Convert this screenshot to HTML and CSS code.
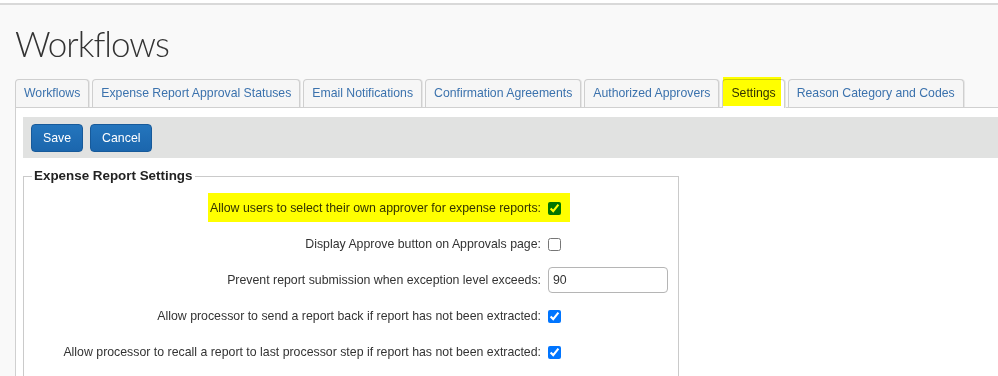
FILE: index.html
```html
<!DOCTYPE html>
<html lang="en">
<head>
  <meta charset="UTF-8">
  <title>Workflows - Settings</title>
  <link rel="stylesheet" href="styles.css">
</head>
<body>
<div class="topbar"></div>
<div class="page">
  <h1>Workflows</h1>

  <ul class="tabs">
    <li class="tab">Workflows</li>
    <li class="tab">Expense Report Approval Statuses</li>
    <li class="tab">Email Notifications</li>
    <li class="tab">Confirmation Agreements</li>
    <li class="tab">Authorized Approvers</li>
    <li class="tab active"><span class="hl hl-tab">Settings</span></li>
    <li class="tab">Reason Category and Codes</li>
  </ul>

  <div class="panel">
    <div class="toolbar">
      <button class="btn">Save</button>
      <button class="btn">Cancel</button>
    </div>

    <fieldset class="group">
      <legend>Expense Report Settings</legend>

      <div class="row">
        <label class="label"><span class="hl hl-row">Allow users to select their own approver for expense reports:</span></label>
        <input type="checkbox" checked>
      </div>
      <div class="row">
        <label class="label">Display Approve button on Approvals page:</label>
        <input type="checkbox">
      </div>
      <div class="row">
        <label class="label">Prevent report submission when exception level exceeds:</label>
        <input type="text" class="field" value="90">
      </div>
      <div class="row">
        <label class="label">Allow processor to send a report back if report has not been extracted:</label>
        <input type="checkbox" checked>
      </div>
      <div class="row">
        <label class="label">Allow processor to recall a report to last processor step if report has not been extracted:</label>
        <input type="checkbox" checked>
      </div>
    </fieldset>
  </div>
</div>
</body>
</html>
```

FILE: styles.css
```css
body {
  margin: 0;
  font-family: "Liberation Sans", Arial, sans-serif;
  font-size: 12.33px;
  color: #333;
  background: #f9f9f9;
}
.topbar {
  height: 3px;
  background: #fff;
  border-bottom: 2px solid #d9d9d9;
}
.page {
  padding: 0 0 0 15px;
}
h1 {
  margin: 0;
  padding: 16px 0 0;
  height: 60px;
  box-sizing: border-box;
  font-family: Lato, "Open Sans", sans-serif;
  font-weight: 300;
  font-size: 35px;
  letter-spacing: -1px;
  line-height: 44px;
  color: #333;
}

/* tabs */
.tabs {
  display: flex;
  gap: 3px;
  margin: 14px 0 0;
  padding: 0;
  list-style: none;
  position: relative;
  z-index: 1;
}
.tab {
  height: 28px;
  box-sizing: border-box;
  padding: 0 8px;
  font-size: 12.25px;
  line-height: 27px;
  color: #3b72ad;
  background: #f6f6f6;
  border: 1px solid #cfcfcf;
  border-bottom: 0;
  border-radius: 4px 4px 0 0;
  box-shadow: 1px 0 0 #e6e6e6;
  white-space: nowrap;
}
.tab.active {
  background: #fff;
  color: #333;
  height: 29px;
  margin-bottom: -1px;
}

/* highlighter marks */
.hl {
  position: relative;
}
.hl::after {
  content: "";
  position: absolute;
  background: #ffff00;
  mix-blend-mode: multiply;
}
.hl-tab::after {
  left: -8px;
  right: -5px;
  top: -9px;
  bottom: -6px;
}
.hl-row::after {
  left: -2px;
  right: -29px;
  top: -8px;
  bottom: -7px;
}

/* panel */
.panel {
  background: #fff;
  border-top: 1px solid #d0d0d0;
  border-left: 1px solid #d0d0d0;
  padding: 9px 0 20px 7px;
}
.toolbar {
  display: flex;
  gap: 7px;
  height: 41px;
  box-sizing: border-box;
  padding: 7px 8px 0;
  background: #e1e2e1;
}
.btn {
  height: 28px;
  padding: 0 11px;
  font-family: inherit;
  font-size: 12.33px;
  color: #fff;
  background: linear-gradient(#2475bd, #1b66ad);
  border: 1px solid #175a9a;
  border-radius: 4px;
}

/* settings group */
.group {
  width: 656px;
  box-sizing: border-box;
  margin: 10px 0 0;
  padding: 6px 0 16px;
  border: 1px solid #cacaca;
}
.group legend {
  margin-left: 8px;
  padding: 0 2px;
  font-size: 13.4px;
  font-weight: bold;
  line-height: 16px;
  color: #222;
}
.row {
  display: grid;
  grid-template-columns: 517px auto;
  column-gap: 7px;
  align-items: center;
  height: 36px;
}
.label {
  text-align: right;
  white-space: nowrap;
}
.row input[type="checkbox"] {
  width: 13px;
  height: 13px;
  margin: 0;
}
.field {
  width: 120px;
  height: 26px;
  box-sizing: border-box;
  margin: 0;
  padding: 0 4px;
  font-family: inherit;
  font-size: 12.33px;
  color: #333;
  border: 1px solid #b5b5b5;
  border-radius: 4px;
}
```
